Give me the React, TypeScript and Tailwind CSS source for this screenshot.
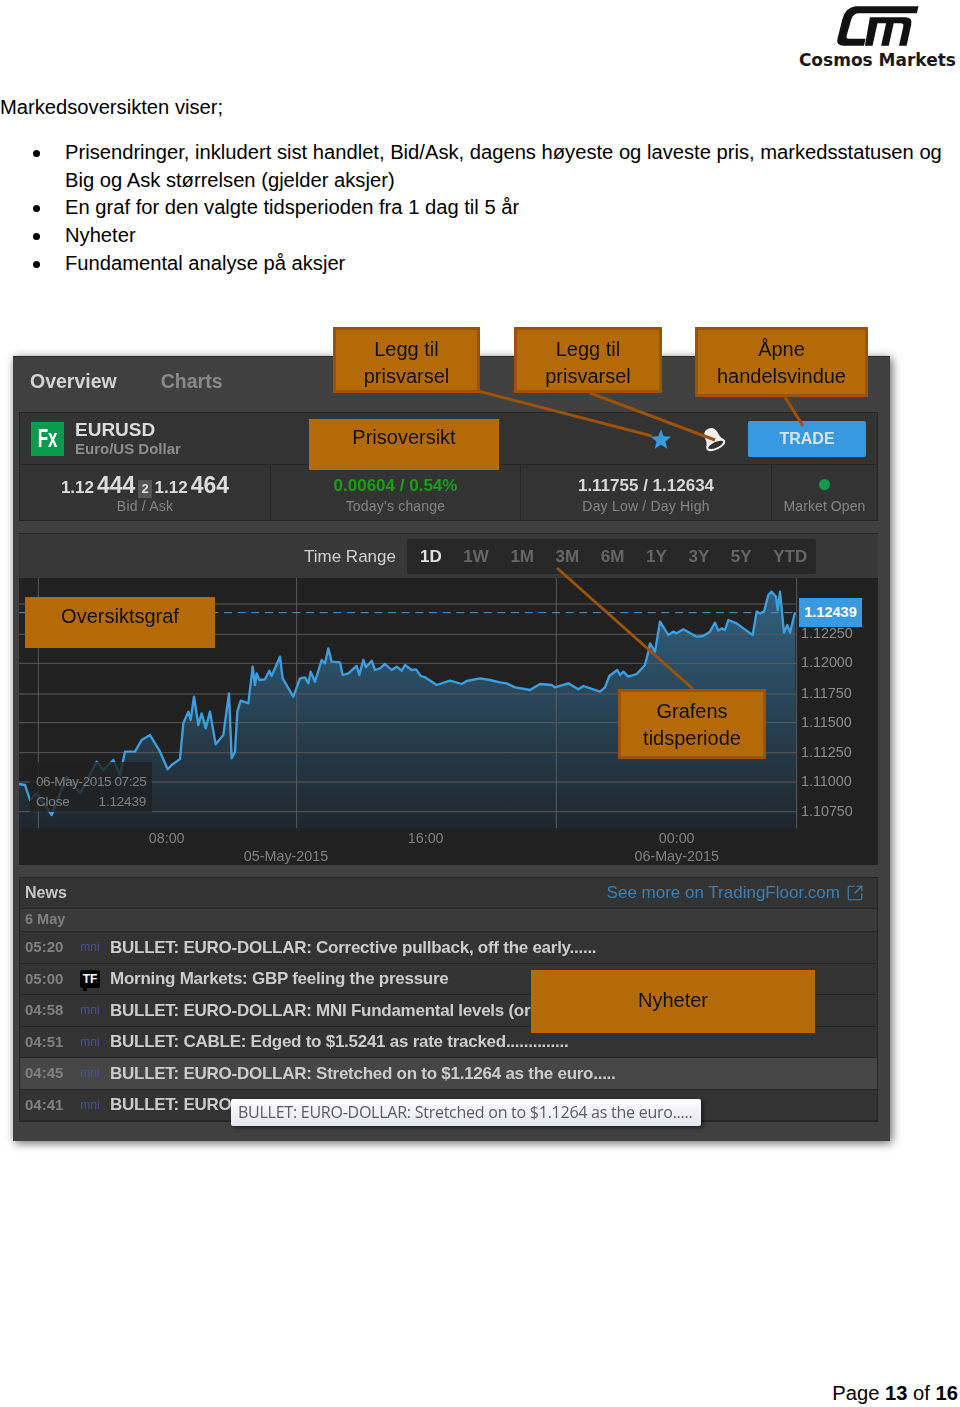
import { SquareArrowOutUpRight } from "lucide-react";

const bullets = [
  "Prisendringer, inkludert sist handlet, Bid/Ask, dagens høyeste og laveste pris, markedsstatusen og Big og Ask størrelsen (gjelder aksjer)",
  "En graf for den valgte tidsperioden fra 1 dag til 5 år",
  "Nyheter",
  "Fundamental analyse på aksjer",
];

const ranges = ["1D", "1W", "1M", "3M", "6M", "1Y", "3Y", "5Y", "YTD"];

const news = [
  { time: "05:20", source: "mni", title: "BULLET: EURO-DOLLAR: Corrective pullback, off the early......" },
  { time: "05:00", source: "tf", title: "Morning Markets: GBP feeling the pressure" },
  { time: "04:58", source: "mni", title: "BULLET: EURO-DOLLAR: MNI Fundamental levels (or" },
  { time: "04:51", source: "mni", title: "BULLET: CABLE: Edged to $1.5241 as rate tracked.............." },
  { time: "04:45", source: "mni", title: "BULLET: EURO-DOLLAR: Stretched on to $1.1264 as the euro.....", active: true },
  { time: "04:41", source: "mni", title: "BULLET: EURO" },
];

// chart coords are 3x page px, origin at page (0,580)
const linePoints =
  "57,612 75,615 90,660 110,640 155,705 200,590 240,640 290,545 310,570 340,540 360,585 375,515 405,515 425,480 450,465 480,515 503,568 515,555 540,537 550,430 565,395 572,420 582,350 595,435 605,400 617,445 630,395 647,493 670,465 687,340 695,535 705,515 712,395 722,362 745,370 758,260 765,315 770,280 778,300 795,298 808,272 815,288 840,230 848,295 880,350 900,295 915,292 925,310 932,275 945,305 965,240 975,250 985,205 995,245 1020,247 1028,285 1045,280 1070,258 1078,285 1090,240 1098,262 1115,242 1125,270 1140,265 1155,252 1175,270 1190,260 1205,272 1215,255 1235,270 1248,268 1262,288 1275,292 1310,315 1350,302 1385,312 1400,303 1440,295 " +
  "1470,300 1500,307 1520,310 1545,322 1590,330 1620,312 1655,315 1665,322 1705,310 1735,328 1750,318 1800,335 1815,322 1828,288 1852,270 1860,285 1870,275 1885,290 1910,282 1935,255 1945,215 1950,190 1965,215 1980,125 2005,165 2020,155 2030,160 2050,148 2090,170 2110,168 2130,155 2145,128 2155,152 2165,145 2175,150 2185,120 2210,130 2230,145 2258,165 2270,95 2280,100 2292,95 2305,45 2315,35 2328,50 2333,90 2340,35 2352,158 2362,135 2370,158 2385,97";

const gridY = [72, 163, 250, 342, 428, 518, 606, 695];
const gridX = [115, 890, 1669, 2390];
const axisLabels = [
  { y: 160, label: "1.12250" },
  { y: 247, label: "1.12000" },
  { y: 338, label: "1.11750" },
  { y: 425, label: "1.11500" },
  { y: 515, label: "1.11250" },
  { y: 602, label: "1.11000" },
  { y: 692, label: "1.10750" },
];
const timeLabels = [
  { x: 500, y: 775, label: "08:00" },
  { x: 858, y: 828, label: "05-May-2015" },
  { x: 1277, y: 775, label: "16:00" },
  { x: 2030, y: 775, label: "00:00" },
  { x: 2030, y: 828, label: "06-May-2015" },
];

function CmLogo() {
  return (
    <svg viewBox="160 10 262 130" className="h-[43px] w-[87px]" fill="#111">
      <path d="M415 17 L225 17 Q195 20 185 55 L170 115 Q165 136 190 136 L250 136 L255 115 L205 115 Q195 115 198 105 L212 55 Q218 38 235 38 L410 38 Z" />
      <path d="M268 50 L375 50 Q398 50 393 72 L379 136 L356 136 L369 78 Q371 68 361 68 L340 68 L325 136 L302 136 L317 68 L291 68 L276 136 L253 136 Z" />
    </svg>
  );
}

function BellIcon() {
  return (
    <svg viewBox="0 0 24 24" className="h-[26px] w-[26px]">
      <g transform="rotate(-25 12 12)">
        <path
          fill="#f0f0f0"
          d="M12 1.5 C7 1.5 5.5 5.5 5.5 9.5 C5.5 12.5 4.5 14.5 3 16.5 L21 16.5 C19.5 14.5 18.5 12.5 18.5 9.5 C18.5 5.5 17 1.5 12 1.5 Z"
        />
        <ellipse cx="12" cy="18" rx="8.5" ry="3.6" fill="#333333" stroke="#f0f0f0" strokeWidth="1.9" />
      </g>
    </svg>
  );
}

function Stat({ value, label, className }: { value: string; label: string; className: string }) {
  return (
    <div className="flex items-center justify-center pt-[4px]">
      <div className="flex flex-col items-center">
        <span className={`text-[17px] font-bold leading-[22px] ${className}`}>{value}</span>
        <span className="text-[14px] leading-[18px] tracking-[0.2px] text-[#858585]">{label}</span>
      </div>
    </div>
  );
}

function PriceChart() {
  return (
    <div className="relative h-[287px] bg-[#212121]">
      <svg viewBox="57 -6 2577 861" className="block h-[287px] w-[859px]">
        <defs>
          <linearGradient id="area" x1="0" y1="0" x2="0" y2="1">
            <stop offset="0" stopColor="#31607f" />
            <stop offset="1" stopColor="#1f262c" />
          </linearGradient>
        </defs>
        <polygon points={`57,745 ${linePoints} 2390,745`} fill="url(#area)" />
        {gridY.map((y) => (
          <line key={y} x1="57" x2="2390" y1={y} y2={y} stroke="#5a5a5a" strokeWidth="3" />
        ))}
        {gridX.map((x) => (
          <line key={x} x1={x} x2={x} y1="-6" y2="745" stroke="#5a5a5a" strokeWidth="3" />
        ))}
        <line x1="57" x2="2390" y1="98" y2="98" stroke="#4a9ad0" strokeWidth="3" strokeDasharray="24 17" />
        <polyline points={linePoints} fill="none" stroke="#3d9fe0" strokeWidth="7" strokeLinejoin="round" />
        {axisLabels.map((a) => (
          <text key={a.label} x="2403" y={a.y} dominantBaseline="central" fontSize="43" fill="#8c8c8c" fontFamily="Liberation Sans">
            {a.label}
          </text>
        ))}
        {timeLabels.map((t) => (
          <text key={t.label} x={t.x} y={t.y} dominantBaseline="central" textAnchor="middle" fontSize="43" fill="#808080" fontFamily="Liberation Sans">
            {t.label}
          </text>
        ))}
      </svg>

      <div className="absolute left-[11px] top-[184px] h-[50px] w-[122px] bg-[#212121]/80 px-[6px] pt-[10px] text-[13.5px] leading-[20px] text-[#808080]">
        <div className="whitespace-nowrap tracking-[-0.4px]">06-May-2015 07:25</div>
        <div className="flex justify-between tracking-[-0.2px]">
          <span>Close</span>
          <span>1.12439</span>
        </div>
      </div>

      <div className="absolute left-[780px] top-[20px] flex h-[29px] w-[63px] items-center justify-center bg-[#3a9ae0] text-[14.5px] font-bold text-white">
        1.12439
      </div>
    </div>
  );
}

function Screenshot() {
  return (
    <div className="ml-[13px] flex h-[785px] w-[877px] flex-col gap-[12px] border-t border-[#2a2a2a] bg-[#404040] pl-[6px] pr-[12px] shadow-[2px_2px_9px_rgba(0,0,0,0.6)] blur-[0.5px]">
      <div className="flex h-[43px] items-center gap-[44px] pl-[11px] pt-[6px] text-[19.5px] font-bold">
        <span className="text-[#d4d4d4]">Overview</span>
        <span className="text-[#8a8a8a]">Charts</span>
      </div>

      <div className="border border-[#262626] bg-[#333333]">
        <div className="flex h-[52px] items-center border-b border-[#262626] pl-[11px] pr-[11px]">
          <div className="flex h-[34px] w-[33px] items-center justify-center bg-[#0b9b4f] text-[25px] font-bold text-white">
            <span className="inline-block scale-x-[0.68]">Fx</span>
          </div>
          <div className="ml-[11px] flex flex-col">
            <span className="text-[19px] font-bold leading-[20px] text-[#dcdcdc]">EURUSD</span>
            <span className="text-[15px] font-bold leading-[17px] text-[#8c8c8c]">Euro/US Dollar</span>
          </div>
          <div className="ml-auto flex items-center">
            <svg viewBox="0 0 24 24" className="h-[22px] w-[22px]" fill="#3a9ae0">
              <path d="M12 1.5 L15 9 L23 9.5 L16.8 14.6 L18.8 22.5 L12 18.2 L5.2 22.5 L7.2 14.6 L1 9.5 L9 9 Z" />
            </svg>
            <div className="ml-[28px]">
              <BellIcon />
            </div>
            <div className="ml-[22px] flex h-[36px] w-[118px] items-center justify-center rounded-[2px] bg-[#379ae0] text-[16px] font-bold text-[#d5e6f2]">
              TRADE
            </div>
          </div>
        </div>

        <div className="grid h-[55px] grid-cols-[251px_250px_251px_1fr] divide-x divide-[#262626]">
          <div className="flex flex-col items-center justify-center pt-[2px]">
            <div className="flex h-[24px] items-baseline gap-[3px] font-bold leading-[24px] text-[#dcdcdc]">
              <span className="text-[17px]">1.12</span>
              <span className="text-[23px]">444</span>
              <span className="bg-[#555] px-[3px] text-[13px] leading-[18px]">2</span>
              <span className="text-[17px]">1.12</span>
              <span className="text-[23px]">464</span>
            </div>
            <span className="text-[14px] leading-[18px] tracking-[0.2px] text-[#858585]">Bid / Ask</span>
          </div>
          <Stat value="0.00604 / 0.54%" label="Today's change" className="text-[#17a017]" />
          <Stat value="1.11755 / 1.12634" label="Day Low / Day High" className="text-[#d8d8d8]" />
          <div className="flex flex-col items-center justify-center gap-[7px] pt-[8px]">
            <span className="h-[11px] w-[11px] rounded-full bg-[#109a4f]" />
            <span className="whitespace-nowrap text-[14px] leading-[18px] tracking-[0.1px] text-[#858585]">Market Open</span>
          </div>
        </div>
      </div>

      <div className="border-t border-[#262626] bg-[#383838]">
        <div className="flex h-[44px] items-center pt-[1px]">
          <span className="ml-[285px] text-[17px] text-[#cfcfcf]">Time Range</span>
          <div className="ml-[11px] flex h-[35px] w-[409px] items-center gap-[21.6px] rounded-[2px] bg-[#272727] pl-[13px] text-[17px] font-bold text-[#666]">
            {ranges.map((r) => (
              <span key={r} className={r === "1D" ? "text-[#e0e0e0]" : undefined}>
                {r}
              </span>
            ))}
          </div>
        </div>
        <PriceChart />
      </div>

      <div className="border border-[#262626] bg-[#333333]">
        <div className="flex h-[31px] items-center justify-between border-b border-[#262626] pl-[5px] pr-[13px]">
          <span className="text-[16px] font-bold text-[#c8c8c8]">News</span>
          <span className="flex items-center gap-[6px] text-[17px] text-[#3b80b5]">
            See more on TradingFloor.com
            <SquareArrowOutUpRight className="h-[18px] w-[18px]" strokeWidth={1.6} />
          </span>
        </div>
        <div className="flex h-[23px] items-center border-b border-[#262626] bg-[#3a3a3a] pl-[5px] text-[14.5px] font-bold text-[#808080]">
          6 May
        </div>
        {news.map((n) => (
          <div
            key={n.time}
            className={`flex h-[31.5px] items-center border-b border-[#262626] pl-[5px] ${n.active ? "bg-[#464646]" : ""}`}
          >
            <span className="w-[55px] text-[15px] font-bold text-[#808080]">{n.time}</span>
            {n.source === "tf" ? (
              <span className="relative flex h-[18px] w-[20px] items-center justify-center rounded-[3px] bg-black text-[12px] font-bold text-white after:absolute after:bottom-[-3px] after:left-[3px] after:h-[4px] after:w-[4px] after:bg-black">
                TF
              </span>
            ) : (
              <span className="w-[20px] text-center text-[12px] text-[#46509e]">mni</span>
            )}
            <span className="ml-[10px] whitespace-nowrap text-[17px] font-bold tracking-[-0.26px] text-[#cccccc]">{n.title}</span>
          </div>
        ))}
      </div>
    </div>
  );
}

function Callout({ className, children }: { className: string; children: React.ReactNode }) {
  return (
    <div className={`absolute bg-[#b56a0a] text-center text-[20px] leading-[26.5px] text-[#111] blur-[0.3px] ${className}`}>
      {children}
    </div>
  );
}

export default function App() {
  return (
    <div className="relative flex h-[1407px] w-[960px] flex-col overflow-hidden bg-white font-['Liberation_Sans',Arial,sans-serif] text-black">
      <header className="flex h-[70px] flex-col items-end pr-[4px] pt-[4px]">
        <div className="mr-[35px]">
          <CmLogo />
        </div>
        <span className="mt-[3px] font-['DejaVu_Sans',sans-serif] text-[17px] font-bold leading-[20px] text-[#1a1a1a]">Cosmos Markets</span>
      </header>

      <p className="mt-[24px] text-[20.18px] leading-[26px]">Markedsoversikten viser;</p>

      <ul className="mt-[19px] flex flex-col text-[20.18px] leading-[27.7px]">
        {bullets.map((b) => (
          <li key={b} className="flex pr-[10px]">
            <span className="ml-[33px] mt-[11px] h-[7px] w-[7px] shrink-0 rounded-full bg-black" />
            <span className="ml-[25px]">{b}</span>
          </li>
        ))}
      </ul>

      <div className="mt-[78.5px]">
        <Screenshot />
      </div>

      <footer className="mt-auto pb-[1px] pr-[2px] text-right text-[20.18px] leading-[26px]">
        Page <b>13</b> of <b>16</b>
      </footer>

      <svg className="pointer-events-none absolute left-0 top-0 h-[1407px] w-[960px]" viewBox="0 0 960 1407" stroke="#9c5208" strokeWidth="3">
        <line x1="478" y1="391" x2="652" y2="436" />
        <line x1="590" y1="393" x2="715" y2="440" />
        <line x1="785" y1="397" x2="803" y2="426" />
        <line x1="557" y1="568" x2="693" y2="689" />
      </svg>

      <Callout className="left-[333px] top-[327px] h-[66px] w-[147px] border-[3px] border-[#9c5208] pt-[6px]">
        Legg til
        <br />
        prisvarsel
      </Callout>
      <Callout className="left-[514px] top-[327px] h-[66px] w-[148px] border-[3px] border-[#9c5208] pt-[6px]">
        Legg til
        <br />
        prisvarsel
      </Callout>
      <Callout className="left-[695px] top-[327px] h-[70px] w-[173px] border-[3px] border-[#9c5208] pt-[6px]">
        Åpne
        <br />
        handelsvindue
      </Callout>
      <Callout className="left-[309px] top-[419px] h-[51px] w-[190px] pt-[5px]">Prisoversikt</Callout>
      <Callout className="left-[25px] top-[597px] h-[51px] w-[190px] pt-[6px]">Oversiktsgraf</Callout>
      <Callout className="left-[618px] top-[689px] h-[70px] w-[148px] border-[3px] border-[#9c5208] pt-[6px]">
        Grafens
        <br />
        tidsperiode
      </Callout>
      <Callout className="left-[531px] top-[970px] h-[63px] w-[284px] pt-[17px]">Nyheter</Callout>

      <div className="absolute left-[231px] top-[1099px] flex h-[27px] w-[470px] items-center rounded-[2px] bg-gradient-to-b from-white to-[#e4e4ee] pb-[1px] pl-[7px] font-['Open_Sans',sans-serif] text-[16px] tracking-[-0.25px] text-[#5a5a60] shadow-[2px_2px_4px_rgba(0,0,0,0.5)] blur-[0.3px]">
        BULLET: EURO-DOLLAR: Stretched on to $1.1264 as the euro.....
      </div>
    </div>
  );
}
